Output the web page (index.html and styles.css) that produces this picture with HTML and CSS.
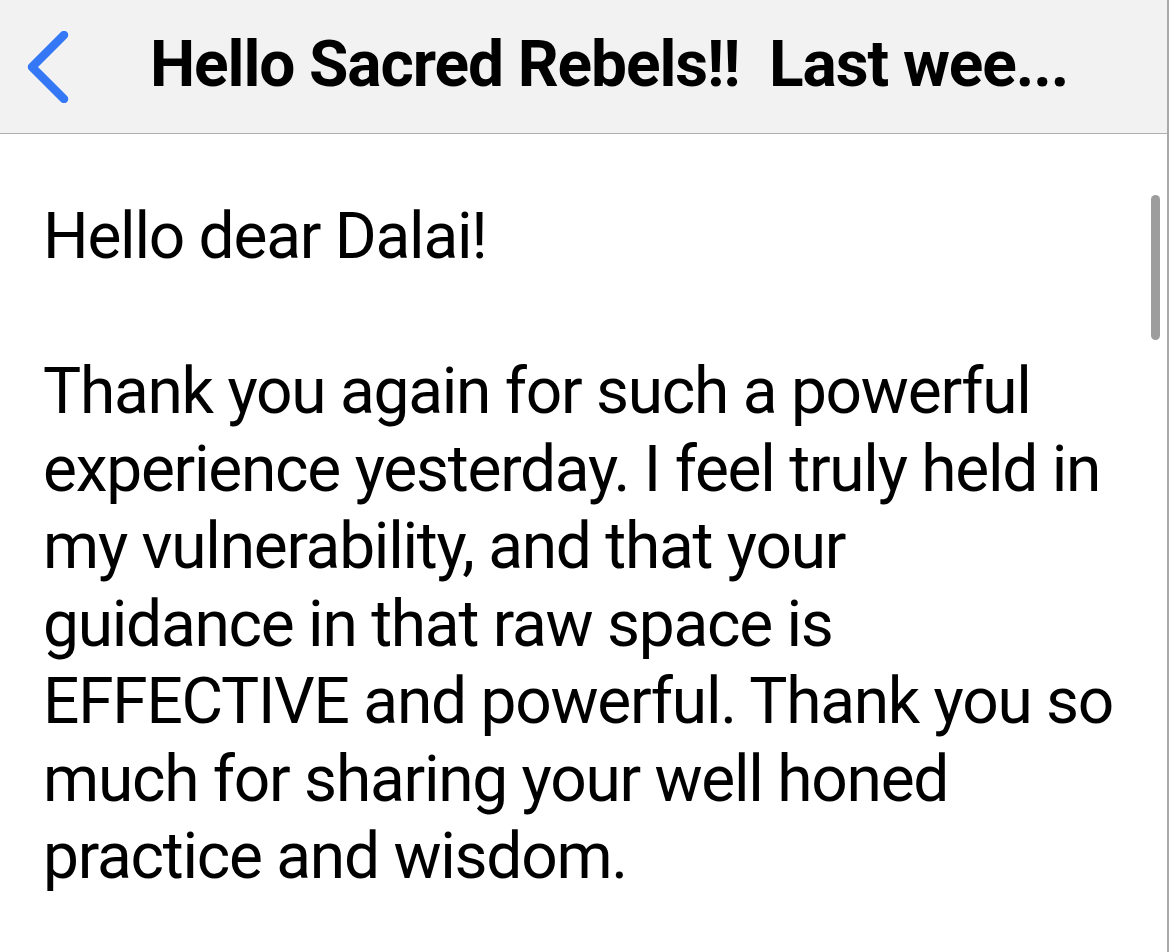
FILE: index.html
```html
<!DOCTYPE html>
<html lang="en">
<head>
<meta charset="utf-8">
<title>Mail</title>
<link rel="stylesheet" href="styles.css">
</head>
<body>
<div class="screen">
  <header class="navbar">
    <button class="back" aria-label="Back">
      <svg width="44" height="72" viewBox="0 0 44 72"><path d="M38 4 L6 36 L38 68" fill="none" stroke="#3478f6" stroke-width="8.5" stroke-linecap="round" stroke-linejoin="round"/></svg>
    </button>
    <h1 class="title">Hello Sacred Rebels!!  Last wee...</h1>
  </header>
  <main class="message">
    <p class="para">Hello dear Dalai!</p>
    <p class="para">Thank you again for such a powerful<br>experience yesterday. I feel truly held in<br>my vulnerability, and that your<br>guidance in that raw space is<br>EFFECTIVE and powerful. Thank you so<br>much for sharing your well honed<br>practice and wisdom.</p>
    <div class="scrollbar"></div>
  </main>
</div>
</body>
</html>
```

FILE: styles.css
```css
html, body {
  margin: 0;
  padding: 0;
  background: #ffffff;
}
body {
  font-family: Roboto, "Liberation Sans", sans-serif;
  color: #000;
}
.screen {
  width: 1169px;
  height: 952px;
  box-sizing: border-box;
  border-right: 2px solid #a9a9a9;
  display: flex;
  flex-direction: column;
  overflow: hidden;
}
.navbar {
  height: 133px;
  flex: none;
  background: #f2f2f2;
  border-bottom: 1px solid #b0b0b0;
  display: flex;
  align-items: center;
}
.back {
  border: 0;
  background: none;
  padding: 0;
  margin: 0 0 0 26px;
  width: 44px;
  height: 72px;
  display: flex;
  align-items: center;
  justify-content: center;
  cursor: pointer;
}
.title {
  margin: -4px 0 0 80px;
  font-size: 64px;
  font-weight: 700;
  letter-spacing: -1.1px;
  white-space: pre;
  line-height: 1;
}
.message {
  position: relative;
  flex: 1;
  padding: 64px 0 0 43px;
}
.para {
  margin: 0 0 77.5px 0;
  font-size: 64px;
  line-height: 77.5px;
  letter-spacing: -1.25px;
  white-space: nowrap;
}
.scrollbar {
  position: absolute;
  top: 61px;
  right: 7px;
  width: 9px;
  height: 145px;
  border-radius: 5px;
  background: #9d9d9d;
}
```
